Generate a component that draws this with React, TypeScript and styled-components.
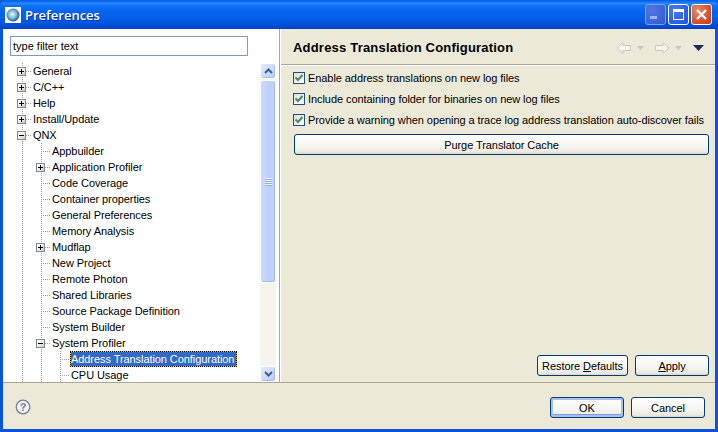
import React from "react";
import styled, { createGlobalStyle, css } from "styled-components";

const Global = createGlobalStyle`
  html, body { margin: 0; padding: 0; overflow: hidden; background: #0855dd; }
  * { box-sizing: border-box; }
`;

const FONT = `"Liberation Sans", "DejaVu Sans", sans-serif`;

const Win = styled.div`
  width: 718px; height: 432px; display: flex; flex-direction: column;
  background: #0855dd; font: 11px/16px ${FONT}; color: #000; overflow: hidden;
  border-radius: 6px 6px 0 0; letter-spacing: -0.07px;
`;
const TitleBar = styled.div`
  height: 29px; flex: none; display: flex; align-items: center; padding: 0 6px 0 5px; letter-spacing: 0;
  background: linear-gradient(180deg, #0a5ae4 0%, #0a6cf4 6%, #2a8cff 11%, #0f72f8 18%, #0464f0 40%, #0460ec 60%, #0254dc 80%, #0349d0 93%, #0340b8 100%);
`;
const TitleIcon = styled.div`
  width: 16px; height: 16px; background: #fff; display: flex; align-items: center; justify-content: center;
`;
const TitleText = styled.div`
  margin: 1px 0 0 4px; flex: 1; color: #fff; font: 600 13px/16px "Open Sans", sans-serif;
  text-shadow: 1px 1px 0 #0f2f9c;
`;
const CapButton = styled.div<{ $kind: "min" | "max" | "close" }>`
  width: 21px; height: 21px; margin-left: 2px; border: 1px solid #fff; border-radius: 3px;
  display: flex; align-items: center; justify-content: center;
  ${(p) => p.$kind === "min" && css`
    border-color: #7d9df0;
    background: radial-gradient(circle at 30% 30%, #5277e0, #3a62d6 70%, #3156c8);
  `}
  ${(p) => p.$kind === "max" && css`
    background: radial-gradient(circle at 30% 30%, #4a7cf0, #2a5fe0 70%, #1f4fd0);
  `}
  ${(p) => p.$kind === "close" && css`
    background: radial-gradient(circle at 30% 30%, #ea8a68, #d9512c 60%, #c23a18);
  `}
`;
const Client = styled.div`
  flex: 1; margin: 0 3px 3px; display: flex; flex-direction: column; background: #ece9d8; min-height: 0;
`;
const Main = styled.div`
  height: 354px; flex: none; display: flex; border-bottom: 1px solid #aca899;
`;
const LeftPane = styled.div`
  width: 276px; flex: none; background: #fff; display: flex; flex-direction: column; padding: 7px 3px 0 7px;
`;
const Sash = styled.div`
  width: 2px; flex: none; background: #aca899; border-right: 1px solid #fff;
`;
const FilterInput = styled.input`
  width: 238px; height: 20px; flex: none; border: 1px solid #7f9db9; padding: 0 2px; margin: 0;
  font: 11px/16px ${FONT}; color: #000; outline: none; background: #fff;
  &::placeholder { color: #000; opacity: 1; }
`;
const TreeArea = styled.div`
  flex: 1; margin-top: 7px; display: flex; min-height: 0; overflow: hidden;
`;
const TreeList = styled.div`
  flex: 1; padding-left: 3px; overflow: hidden;
`;
const Row = styled.div`
  height: 16px; display: flex; align-items: center; white-space: nowrap;
`;
const dots = "#a0a0a0";
const Cell = styled.div<{ $v?: boolean; $h?: boolean }>`
  width: 19px; height: 16px; flex: none; display: flex; align-items: center; padding-left: 5px;
  background-repeat: no-repeat;
  background-image:
    ${(p) => p.$v ? `repeating-linear-gradient(180deg, ${dots} 0 1px, transparent 1px 2px)` : "none"},
    ${(p) => p.$h ? `repeating-linear-gradient(90deg, ${dots} 0 1px, transparent 1px 2px)` : "none"};
  background-size: 1px 16px, 10px 1px;
  background-position: 9px 0, 9px 8px;
`;
const Expander = styled.div`
  width: 9px; height: 9px; border: 1px solid #7a8a99; background: linear-gradient(135deg, #fff 20%, #d8d4c4 90%);
  position: relative; margin-top: 1px; margin-left: -1px;
  &::before { content: ""; position: absolute; left: 1px; top: 3px; width: 5px; height: 1px; background: #000; }
`;
const Plus = styled(Expander)`
  &::after { content: ""; position: absolute; left: 3px; top: 1px; width: 1px; height: 5px; background: #000; }
`;
const Label = styled.div<{ $selected?: boolean }>`
  margin-left: ${(p) => (p.$selected ? "0" : "1px")};
  height: 16px; line-height: 17px;
  ${(p) => p.$selected && css`
    background: #316ac5; color: #fff; border: 1px solid #e8c040; outline: 1px dotted #000; outline-offset: -1px;
    line-height: 15px; padding: 0 2px 0 0;
    width: 167px;
  `}
`;
const ScrollBar = styled.div`
  width: 16px; flex: none; display: flex; flex-direction: column; background: #f6f4ec;
`;
const ScrollBtn = styled.div`
  width: 16px; height: 16px; flex: none; border: 1px solid #fff; border-radius: 3px;
  background: linear-gradient(135deg, #e2ebfe, #b9cdf8); display: flex; align-items: center; justify-content: center;
  box-shadow: inset -1px -1px 0 #a6bdf0;
`;
const Thumb = styled.div`
  width: 16px; height: 203px; flex: none; margin-top: 1px; border: 1px solid #fff; border-radius: 3px;
  background: linear-gradient(90deg, #cddcfd, #bccff9 60%, #c6d6fb); display: flex; align-items: center; justify-content: center;
  box-shadow: inset -1px -1px 0 #9fb7ea;
`;
const Grip = styled.div`
  width: 7px; height: 8px; background: repeating-linear-gradient(180deg, #eef3fe 0 1px, #8fadea 1px 2px);
`;
const ScrollSpacer = styled.div`
  flex: 1;
`;
const RightPane = styled.div`
  flex: 1; display: flex; flex-direction: column; min-width: 0;
`;
const Header = styled.div`
  height: 36px; flex: none; display: flex; align-items: center; padding: 2px 11px 0 12px;
  border-bottom: 1px solid #aca899; box-shadow: 0 1px 0 #fff;
`;
const HeaderTitle = styled.div`
  flex: 1; font: bold 13px/16px "Liberation Sans", sans-serif; letter-spacing: 0.2px;
`;
const Tools = styled.div`
  display: flex; align-items: center;
`;
const ToolGap = styled.span`
  width: 10px;
`;
const Content = styled.div`
  flex: 1; display: flex; flex-direction: column; padding: 2px 6px 6px 12px;
`;
const CheckRow = styled.label`
  height: 21px; display: flex; align-items: center; gap: 3px; white-space: nowrap;
`;
const CheckBox = styled.div`
  width: 12px; height: 12px; flex: none; border: 1px solid #1c5180; background: linear-gradient(135deg, #dcdcd7, #fff);
  display: flex; align-items: center; justify-content: center;
`;
const Button = styled.button<{ $w?: number; $default?: boolean }>`
  height: 21px; padding: 0; margin: 0; border: 1px solid #003c74; border-radius: 3px;
  width: ${(p) => (p.$w ? p.$w + "px" : "auto")};
  background: linear-gradient(180deg, #fff 0%, #f6f5f0 60%, #eceae0 90%, #d8d3c6 100%);
  font: 11px/16px ${FONT}; color: #000; letter-spacing: -0.07px;
  ${(p) => p.$default && css`
    box-shadow: inset 0 0 0 2px #a6c0ee, inset 0 -1px 0 2px #7f9be6;
  `}
`;
const WideButton = styled(Button)`
  margin: 4px 0 0 1px;
`;
const Spacer = styled.div`
  flex: 1;
`;
const ActionRow = styled.div`
  display: flex; justify-content: flex-end; gap: 7px;
`;
const Footer = styled.div`
  flex: 1; display: flex; align-items: flex-start; justify-content: space-between; padding: 14px 10px 0 12px;
`;
const FooterButtons = styled.div`
  display: flex; gap: 7px;
`;
const HelpWrap = styled.div`
  width: 16px; height: 16px; margin-top: 2px;
`;

type Node = { t: string; cells: ("v" | "vh" | "plus" | "minus")[]; sel?: boolean };
const tree: Node[] = [
  { t: "General", cells: ["plus"] },
  { t: "C/C++", cells: ["plus"] },
  { t: "Help", cells: ["plus"] },
  { t: "Install/Update", cells: ["plus"] },
  { t: "QNX", cells: ["minus"] },
  { t: "Appbuilder", cells: ["v", "vh"] },
  { t: "Application Profiler", cells: ["v", "plus"] },
  { t: "Code Coverage", cells: ["v", "vh"] },
  { t: "Container properties", cells: ["v", "vh"] },
  { t: "General Preferences", cells: ["v", "vh"] },
  { t: "Memory Analysis", cells: ["v", "vh"] },
  { t: "Mudflap", cells: ["v", "plus"] },
  { t: "New Project", cells: ["v", "vh"] },
  { t: "Remote Photon", cells: ["v", "vh"] },
  { t: "Shared Libraries", cells: ["v", "vh"] },
  { t: "Source Package Definition", cells: ["v", "vh"] },
  { t: "System Builder", cells: ["v", "vh"] },
  { t: "System Profiler", cells: ["v", "minus"] },
  { t: "Address Translation Configuration", cells: ["v", "v", "vh"], sel: true },
  { t: "CPU Usage", cells: ["v", "v", "vh"] },
];

const Sphere = () => (
  <svg width="14" height="14" viewBox="0 0 14 14">
    <defs>
      <radialGradient id="sph" cx="0.45" cy="0.45" r="0.6">
        <stop offset="0" stopColor="#e8f6fb" />
        <stop offset="0.45" stopColor="#8cc4dc" />
        <stop offset="0.85" stopColor="#1f6f9c" />
        <stop offset="1" stopColor="#0c4a78" />
      </radialGradient>
    </defs>
    <circle cx="7" cy="7" r="6.5" fill="url(#sph)" />
  </svg>
);

const NavArrow = ({ dir }: { dir: "l" | "r" }) => (
  <svg width="16" height="16" viewBox="0 0 16 16" style={{ transform: dir === "r" ? "scaleX(-1)" : undefined }}>
    <path d="M1 8 L7 2.5 V5.5 H14.5 V10.5 H7 V13.5 Z" fill="#f4f3ee" stroke="#c8c8c0" strokeLinejoin="round" />
  </svg>
);
const Caret = ({ w, h, fill, ml }: { w: number; h: number; fill: string; ml: number }) => (
  <svg width={w} height={h} viewBox={`0 0 ${w} ${h}`} style={{ marginLeft: ml }}>
    <path d={`M0 0 H${w} L${w / 2} ${h} Z`} fill={fill} />
  </svg>
);
const Check = () => (
  <svg width="10" height="10" viewBox="0 0 10 10">
    <path d="M1.5 4.5 L4 7 L8.5 2" fill="none" stroke="#4b8a68" strokeWidth="2" />
  </svg>
);
const Chevron = ({ up }: { up?: boolean }) => (
  <svg width="9" height="6" viewBox="0 0 9 6">
    <path d={up ? "M1 5 L4.5 1.5 L8 5" : "M1 1 L4.5 4.5 L8 1"} fill="none" stroke="#3f5f96" strokeWidth="2" />
  </svg>
);
const Help = () => (
  <svg width="16" height="16" viewBox="0 0 16 16">
    <circle cx="8" cy="8" r="6.8" fill="#f4f3ee" stroke="#6d8299" strokeWidth="1.3" />
    <text x="8" y="12" textAnchor="middle" fontFamily="Liberation Sans, sans-serif" fontWeight="bold" fontSize="11" fill="#6d8299">?</text>
  </svg>
);

const renderCell = (c: Node["cells"][number], i: number) => {
  switch (c) {
    case "v": return <Cell key={i} $v />;
    case "vh": return <Cell key={i} $v $h />;
    case "plus": return <Cell key={i} $v $h><Plus /></Cell>;
    case "minus": return <Cell key={i} $v $h><Expander /></Cell>;
  }
};

export default function App() {
  return (
    <Win>
      <Global />
      <TitleBar>
        <TitleIcon><Sphere /></TitleIcon>
        <TitleText>Preferences</TitleText>
        <CapButton $kind="min">
          <svg width="13" height="13" viewBox="0 0 13 13"><rect x="1" y="8" width="7" height="3" fill="#9db4ef" /></svg>
        </CapButton>
        <CapButton $kind="max">
          <svg width="13" height="13" viewBox="0 0 13 13"><rect x="1.5" y="1.5" width="10" height="10" fill="none" stroke="#fff" /><rect x="1" y="1" width="11" height="3" fill="#fff" /></svg>
        </CapButton>
        <CapButton $kind="close">
          <svg width="13" height="13" viewBox="0 0 13 13"><path d="M2 2 L11 11 M11 2 L2 11" stroke="#fff" strokeWidth="2.4" /></svg>
        </CapButton>
      </TitleBar>
      <Client>
        <Main>
          <LeftPane>
            <FilterInput readOnly placeholder="type filter text" />
            <TreeArea>
              <TreeList>
                {tree.map((n) => (
                  <Row key={n.t}>
                    {n.cells.map(renderCell)}
                    <Label $selected={n.sel}>{n.t}</Label>
                  </Row>
                ))}
              </TreeList>
              <ScrollBar>
                <ScrollBtn><Chevron up /></ScrollBtn>
                <Thumb><Grip /></Thumb>
                <ScrollSpacer />
                <ScrollBtn><Chevron /></ScrollBtn>
              </ScrollBar>
            </TreeArea>
          </LeftPane>
          <Sash />
          <RightPane>
            <Header>
              <HeaderTitle>Address Translation Configuration</HeaderTitle>
              <Tools>
                <NavArrow dir="l" />
                <Caret w={7} h={4} fill="#c8c8c0" ml={5} />
                <ToolGap />
                <NavArrow dir="r" />
                <Caret w={7} h={4} fill="#c8c8c0" ml={5} />
                <Caret w={11} h={6} fill="#1c2a5c" ml={11} />
              </Tools>
            </Header>
            <Content>
              <CheckRow><CheckBox><Check /></CheckBox>Enable address translations on new log files</CheckRow>
              <CheckRow><CheckBox><Check /></CheckBox>Include containing folder for binaries on new log files</CheckRow>
              <CheckRow><CheckBox><Check /></CheckBox>Provide a warning when opening a trace log address translation auto-discover fails</CheckRow>
              <WideButton>Purge Translator Cache</WideButton>
              <Spacer />
              <ActionRow>
                <Button $w={91}>Restore <u>D</u>efaults</Button>
                <Button $w={74}><u>A</u>pply</Button>
              </ActionRow>
            </Content>
          </RightPane>
        </Main>
        <Footer>
          <HelpWrap><Help /></HelpWrap>
          <FooterButtons>
            <Button $w={74} $default>OK</Button>
            <Button $w={74}>Cancel</Button>
          </FooterButtons>
        </Footer>
      </Client>
    </Win>
  );
}
